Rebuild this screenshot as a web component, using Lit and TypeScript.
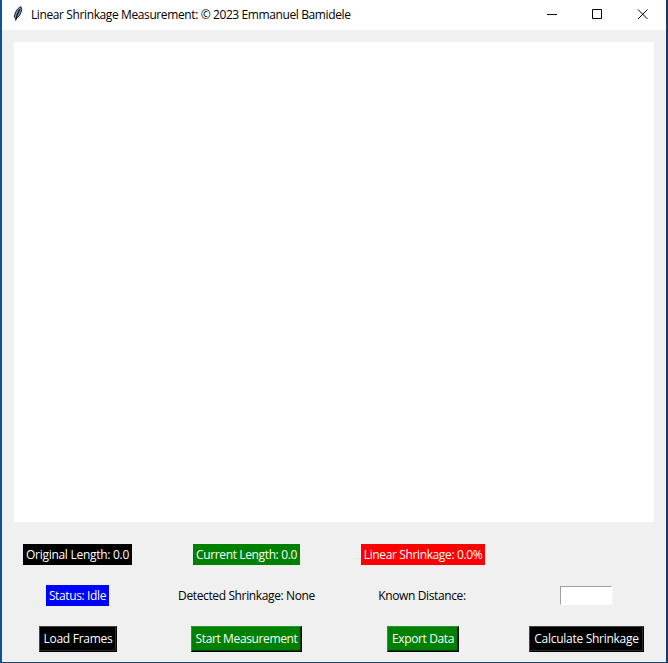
import { LitElement, html, css, svg } from "lit";
import { customElement } from "lit/decorators.js";

@customElement("app-root")
export class AppRoot extends LitElement {
  static styles = css`
    :host {
      display: flex;
      flex-direction: column;
      box-sizing: border-box;
      width: 668px;
      height: 663px;
      border-left: 2px solid #0a539b;
      border-right: 2px solid #153a70;
      border-bottom: 1px solid #174572;
      background: #f0f0f0;
      color: #000;
      font: 12px/15px "Open Sans", "Noto Sans", sans-serif;
      letter-spacing: -0.28px;
      white-space: nowrap;
      overflow: hidden;
    }
    .titlebar {
      display: flex;
      align-items: center;
      height: 30px;
      background: #fff;
      flex: none;
    }
    .feather { width: 14px; height: 18px; margin: 0 6px 0 9px; flex: none; }
    .title { flex: 1; letter-spacing: -0.39px; padding-bottom: 2px; }
    .controls { display: flex; margin-right: 2px; }
    .control { width: 45px; height: 30px; display: block; }
    .canvas { height: 480px; margin: 12px; background: #fff; flex: none; }
    .panel {
      display: grid;
      grid-template-columns: 152px 185px 168px 159px;
      grid-template-rows: 21px 21px 26px;
      row-gap: 20px;
      margin-top: 10px;
      justify-items: center;
      align-items: center;
    }
    .label, .button {
      box-sizing: border-box;
      display: flex;
      justify-content: center;
      align-items: center;
      height: 21px;
    }
    .button {
      height: 26px;
      padding: 0 0 1px;
      font: inherit;
      letter-spacing: inherit;
      border: 1px solid;
      color: #fff;
    }
    .black { background: #000; color: #fff; }
    .green { background: #008000; color: #fff; }
    .red { background: #f00; color: #fff; }
    .blue { background: #00f; color: #fff; }
    .button.black { border-color: #444 #000 #000 #444; box-shadow: inset -1px -1px #2c2c2c; }
    .button.green { border-color: #2b942b #000 #000 #2b942b; box-shadow: inset -1px -1px #003c00; }
    .original { width: 109px; margin-right: 1px; }
    .current, .linear, .status, .detected, .known, .button.start, .button.export { letter-spacing: -0.37px; }
    .current { width: 107px; }
    .linear { width: 124px; }
    .status { width: 63px; margin-right: 1px; }
    .detected { width: 139px; }
    .known { width: 90px; margin-right: 2px; }
    .load { width: 78px; }
    .start { width: 111px; }
    .export { width: 72px; }
    .calculate { width: 115px; }
    .entry {
      box-sizing: border-box;
      width: 52px;
      height: 19px;
      margin-right: 1px;
      padding: 0 2px;
      border: 1px solid;
      border-color: #a0a0a0 #fff #fff #a0a0a0;
      border-radius: 0;
      background: #fff;
      outline: none;
    }
    .blank { width: 1px; }
  `;

  render() {
    return html`
      <div class="titlebar">
        <svg class="feather" viewBox="0 0 14 18">
          <path d="M10 .7C7.6 1.2 5 4.4 4 7.8L3.2 11.3L4.8 12.8C8 11.2 10.2 7.4 10.7 3.6Z" fill="#7496b8" stroke="#18283c" stroke-width="1"/>
          <path d="M9 3C7 6.2 5.4 9.5 4.6 14.5" fill="none" stroke="#05080e" stroke-width="1.3"/>
        </svg>
        <span class="title">Linear Shrinkage Measurement: © 2023 Emmanuel Bamidele</span>
        <div class="controls">
          ${[
            svg`<path d="M18 14.5H28"/>`,
            svg`<path d="M18.5 9.5H27.5V18.5H18.5Z"/>`,
            svg`<path d="M19 9.5L28.5 19M28.5 9.5L19 19"/>`,
          ].map(
            (shape) => html`<svg class="control" viewBox="0 0 45 30" fill="none" stroke="#000">${shape}</svg>`
          )}
        </div>
      </div>
      <div class="canvas"></div>
      <div class="panel">
        <span class="label black original">Original Length: 0.0</span>
        <span class="label green current">Current Length: 0.0</span>
        <span class="label red linear">Linear Shrinkage: 0.0%</span>
        <span class="blank"></span>
        <span class="label blue status">Status: Idle</span>
        <span class="label detected">Detected Shrinkage: None</span>
        <span class="label known">Known Distance:</span>
        <input class="entry" type="text" />
        <button class="button black load">Load Frames</button>
        <button class="button green start">Start Measurement</button>
        <button class="button green export">Export Data</button>
        <button class="button black calculate">Calculate Shrinkage</button>
      </div>
    `;
  }
}
